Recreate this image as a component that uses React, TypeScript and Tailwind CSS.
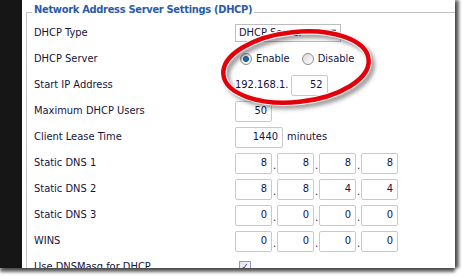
import React from 'react'

const font = { fontFamily: '"DejaVu Sans Condensed", "Liberation Sans", sans-serif' }

function Box({ value, w = 'w-[37px]' }: { value: string; w?: string }) {
  return (
    <div className={`${w} h-[21px] shrink-0 border border-[#c9c9c9] rounded-[2px] bg-white flex items-center justify-end pr-[4px] text-[#141446]`}>
      {value}
    </div>
  )
}

function Ip({ parts }: { parts: string[] }) {
  return (
    <div className="flex items-center">
      {parts.map((p, i) => (
        <React.Fragment key={i}>
          <Box value={p} />
          {i < parts.length - 1 && <span className="w-[5px] text-center self-end pb-[3px] leading-none">.</span>}
        </React.Fragment>
      ))}
    </div>
  )
}

function Radio({ checked }: { checked?: boolean }) {
  return (
    <span className="w-[12px] h-[12px] rounded-full border border-[#8c8c8c] bg-gradient-to-br from-[#d8d8d8] to-[#ffffff] flex items-center justify-center shrink-0">
      {checked && <span className="w-[6px] h-[6px] rounded-full bg-[#1d6fae] border border-[#0e4c80]" />}
    </span>
  )
}

function Row({ label, children }: { label: string; children?: React.ReactNode }) {
  return (
    <div className="h-[26px] flex items-center">
      <div className="w-[201px] shrink-0">{label}</div>
      <div className="flex items-center">{children}</div>
    </div>
  )
}

export default function App() {
  return (
    <div className="w-[463px] h-[276px] bg-white overflow-hidden text-[11px] text-[#14143c]" style={font}>
      <div className="relative flex w-[455px] h-[268px] shadow-[4px_0_3px_rgba(0,0,0,0.6),0_4px_3px_rgba(0,0,0,0.6)]">
        <div className="w-[22px] shrink-0 bg-[#161616]" />
        <div className="flex-1 bg-white overflow-hidden pl-[4px] pt-[12px]">
          <div className="relative h-[300px] border-l border-t border-[#c3c3c3] pl-[7px] pt-[7px]">
            <div className="absolute top-[-10px] left-[5px] bg-white px-[2px] text-[11px] font-bold leading-[14px] tracking-[-0.3px] text-[#2b5ba8]">
              Network Address Server Settings (DHCP)
            </div>
            <Row label="DHCP Type">
              <div className="w-[106px] h-[18px] border border-[#bdbdbd] bg-white flex items-center justify-between pl-[3px] pr-[4px]">
                <span>DHCP Server</span>
                <span className="text-[8px] leading-none">▼</span>
              </div>
            </Row>
            <Row label="DHCP Server">
              <div className="flex items-center pl-[5px]">
                <Radio checked />
                <span className="ml-[4px]">Enable</span>
                <span className="ml-[12px]"><Radio /></span>
                <span className="ml-[4px]">Disable</span>
              </div>
            </Row>
            <Row label="Start IP Address">
              <span className="mr-[2px]">192.168.1.</span>
              <Box value="52" />
            </Row>
            <Row label="Maximum DHCP Users">
              <Box value="50" />
            </Row>
            <Row label="Client Lease Time">
              <Box value="1440" w="w-[48px]" />
              <span className="ml-[4px]">minutes</span>
            </Row>
            <Row label="Static DNS 1">
              <Ip parts={['8', '8', '8', '8']} />
            </Row>
            <Row label="Static DNS 2">
              <Ip parts={['8', '8', '4', '4']} />
            </Row>
            <Row label="Static DNS 3">
              <Ip parts={['0', '0', '0', '0']} />
            </Row>
            <Row label="WINS">
              <Ip parts={['0', '0', '0', '0']} />
            </Row>
            <Row label="Use DNSMasq for DHCP">
              <span className="ml-[4px] w-[12px] h-[12px] border border-[#8e9fb5] bg-gradient-to-br from-[#dfe5ee] to-[#ffffff] flex items-center justify-center text-[#2a3f8f] text-[10px] leading-none">✓</span>
            </Row>
          </div>
        </div>
        <svg className="absolute inset-0 pointer-events-none" width="455" height="268" viewBox="0 0 455 268">
          <defs>
            <filter id="sh" x="-20%" y="-20%" width="140%" height="140%">
              <feGaussianBlur stdDeviation="2" />
            </filter>
          </defs>
          <g transform="rotate(-6 296 67)">
            <ellipse cx="299" cy="71" rx="73" ry="35" fill="none" stroke="rgba(0,0,0,0.45)" strokeWidth="5" filter="url(#sh)" />
            <ellipse cx="296" cy="67" rx="73" ry="35" fill="none" stroke="#ffffff" strokeWidth="6.5" />
            <ellipse cx="296" cy="67" rx="73" ry="35" fill="none" stroke="#e3000b" strokeWidth="4.5" />
          </g>
        </svg>
      </div>
    </div>
  )
}
